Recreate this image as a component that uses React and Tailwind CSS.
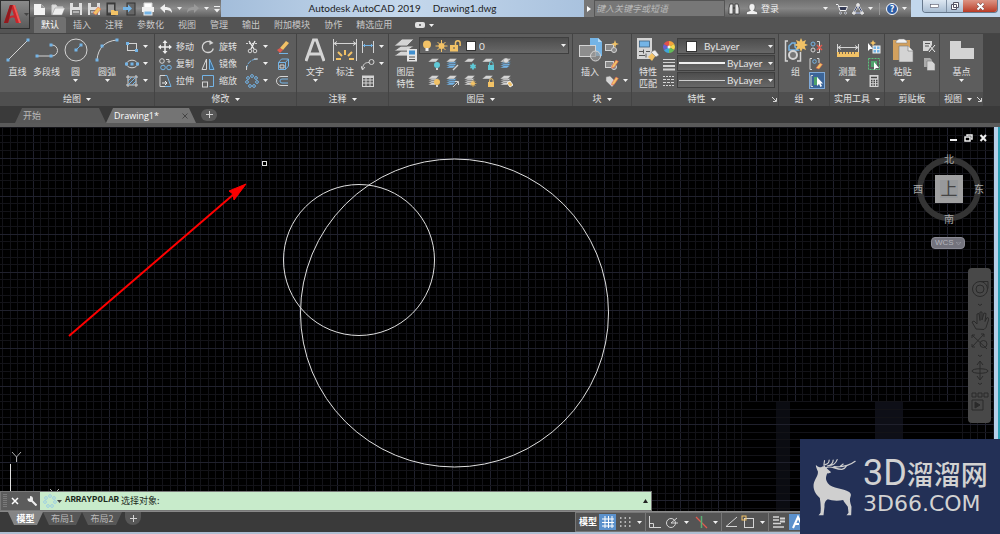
import { Fragment } from 'react';

const L = '#d4d4d4';
const B = '#74b4e6';
const Y = '#f2c266';
const R = '#e05a4e';

function Icon({ w = 14, h = 14, children }) {
  return (
    <svg width={w} height={h} viewBox={`0 0 ${w} ${h}`} fill="none" stroke={L} className="shrink-0" aria-hidden="true">
      {children}
    </svg>
  );
}

function Caret({ dark }) {
  return (
    <svg width="5" height="3" viewBox="0 0 5 3" className="shrink-0" aria-hidden="true">
      <path d="M0 0h5L2.5 3z" fill={dark ? '#444' : '#f0f0f0'} />
    </svg>
  );
}

/* ---------- shared drawing pieces ---------- */

const Dot = ({ x, y }) => <rect x={x - 1.5} y={y - 1.5} width="3" height="3" fill={B} stroke="none" />;

function Sheets({ mark, stack }) {
  return (
    <Icon w={14} h={14}>
      {stack && <path d="M1 9l4-2.5h7L9 9z M1 6.8l4-2.3h7L9 6.8z" fill={stack} stroke="#555" strokeWidth=".4" />}
      {stack && <path d="M1 11l4-2.5h6L8 11z" fill={stack} stroke="#555" strokeWidth=".4" />}
      <path d="M1 5l4-3.5h7L9 5z" fill={L} stroke="#555" strokeWidth=".4" />
      {mark}
    </Icon>
  );
}

const bulb = (c) => <g stroke="none" fill={c}><circle cx="10" cy="8" r="3" /><rect x="9" y="11" width="2" height="2" fill={L} /></g>;
const lock = (c) => <g><path d="M8.5 8V6.5a1.8 1.8 0 013.6 0V8" stroke={c} /><rect x="7" y="8" width="6" height="5" fill={c} stroke="none" /></g>;
const snow = <g stroke="#5fc8d6"><circle cx="10" cy="9.5" r="2" fill="#5fc8d6" /><path d="M10 6v7M7 8l6 3M7 11l6-3" /></g>;
const sunMark = <g stroke={Y}><circle cx="10" cy="9.5" r="1.6" fill={Y} /><path d="M10 6v7M6.5 9.5h7M7.6 7l4.8 5M12.4 7l-4.8 5" strokeWidth=".7" /></g>;
const pencil = <path d="M7 9l4-6 2.4 1.4L9 10.6 6.6 11z" fill={Y} stroke={R} strokeWidth=".6" />;

function Dots({ color = B, bg = 'none' }) {
  const spots = [[7, 2], [11, 4], [12, 8], [9, 12], [5, 12], [2, 8], [3, 4]];
  return (
    <Icon>
      {spots.map(([x, y]) => <circle key={`${x}-${y}`} cx={x} cy={y} r="1.4" stroke={color} fill={bg} />)}
    </Icon>
  );
}

/* ---------- big icons ---------- */

const icons = {
  line: <Icon w={24} h={24}><path d="M2 22L22 2" /><Dot x={2} y={22} /><Dot x={22} y={2} /></Icon>,
  pline: <Icon w={24} h={24}><path d="M2 18h15a5.5 5.5 0 000-11" /><Dot x={2} y={18} /><Dot x={16} y={18} /><Dot x={16} y={7} /></Icon>,
  circle: <Icon w={24} h={24}><circle cx="12" cy="12" r="11" /><path d="M12 12l6-6" stroke={B} /><Dot x={12} y={12} /><Dot x={17} y={7} /></Icon>,
  arc: <Icon w={24} h={24}><path d="M2 22C3 10 10 3 22 2" /><Dot x={2} y={22} /><Dot x={7} y={8} /><Dot x={22} y={2} /></Icon>,
  text: (
    <Icon w={20} h={24}>
      <path d="M1 23L8.5 2h3L19 23M4.5 16h11" strokeWidth="3" />
    </Icon>
  ),
  dim: (
    <Icon w={26} h={24}>
      <path d="M1.5 1v22M24.5 1v22M2 5.500h22M5 3.500l-3 2 3 2M21 3.500l3 2-3 2" />
      <path d="M13 12v5M6 14l4 4M20 14l-4 4M4 21h5M17 21h5" stroke={Y} strokeWidth="2" />
    </Icon>
  ),
  layer: (
    <Icon w={25} h={24}>
      <g fill={L} stroke="#5a5a5a" strokeWidth=".8">
        <path d="M1 18l7-5h13l-7 5z" /><path d="M1 13l7-5h13l-7 5z" /><path d="M1 8l8-7h12l-7 7z" />
      </g>
      <rect x="14" y="11" width="10" height="12.500" fill="#e4e4e4" stroke="none" />
      <rect x="16" y="12.500" width="6" height="4" fill="#3f8fd0" stroke="none" />
      <path d="M16 19h6M16 21.500h6" stroke="#555" />
    </Icon>
  ),
  insert: (
    <Icon w={25} h={24}>
      <path d="M12 0h8l4 4v14H12z" fill={B} stroke="none" /><path d="M20 0v4h4" fill="#b8dcf6" stroke="none" />
      <rect x="1.500" y="7.500" width="16" height="11" fill="#8e8e8e" /><circle cx="17.500" cy="18" r="5" fill="#999" fillOpacity=".7" />
    </Icon>
  ),
  match: (
    <Icon w={22} h={24}>
      <rect x="0" y="0" width="15" height="21" fill={L} stroke="none" />
      <rect x="2.500" y="3" width="10" height="6" fill={B} stroke="#3d5f7d" strokeWidth=".8" />
      <path d="M2 13.500h4M9 13.500h4M2 17.500h6M6.500 11.500v4M9 15.500v4" stroke="#555" />
      <path d="M11 19l5-5 3 3-4 6z" fill={Y} stroke="none" /><path d="M14 14l4-2 4 5-3 2z" fill="#eee" stroke="#777" strokeWidth=".5" />
    </Icon>
  ),
  group: (
    <Icon w={24} h={24}>
      <path d="M4 3H1.500v20H4M13 23h3.500V14" strokeWidth="1.500" />
      <path d="M5 12V8l3-3h3v4l3 3z" stroke={B} strokeWidth="1.500" /><circle cx="9" cy="17" r="4" strokeWidth="2" fill="#777" />
      <path d="M17 0l1.600 3.500L22 2l-1.300 3.600L24 7l-3.300 1.300L22 12l-3.400-1.600L17 14l-1.500-3.600L12 12l1.400-3.700L10 7l3.400-1.400L12 2l3.500 1.500z" fill={Y} stroke="none" />
    </Icon>
  ),
  measure: (
    <Icon w={22} h={24}>
      <path d="M.5 6v9M21.500 6v9M1 9.500h20M4 7.500l-3 2 3 2M18 7.500l3 2-3 2" />
      <rect x="0" y="14" width="22" height="5" fill={Y} stroke="none" /><path d="M2.500 14v2M5.500 14v2M8.500 14v2M11.500 14v2M14.500 14v2M17.500 14v2" stroke="#765" />
    </Icon>
  ),
  paste: (
    <Icon w={22} h={24}>
      <rect x="1" y="2" width="17" height="20" fill="#d3a15e" stroke="none" />
      <path d="M4 5V3l3-2h5l3 2v2z" fill="#f0f0f0" stroke="#777" strokeWidth=".5" />
      <path d="M7 8h9l5 5v11H7z" fill={L} stroke="#777" strokeWidth=".6" /><path d="M16 8v5h5" fill="#eee" stroke="#777" strokeWidth=".6" />
    </Icon>
  ),
  base: <Icon w={24} h={24}><path d="M0 3h11v7h13v11H0z" fill={L} stroke="none" /></Icon>,
};

function BigButton({ icon, label, second, caret, className }) {
  return (
    <button type="button" className={`flex flex-col items-center pt-1 text-[9px] leading-[12px] ${className}`}>
      {icons[icon]}
      <span className="mt-1 whitespace-nowrap">{label}</span>
      {second && <span>{second}</span>}
      {caret && <span className="mt-px"><Caret /></span>}
    </button>
  );
}

function SmallButton({ icon, label, title, caret, active }) {
  return (
    <button
      type="button"
      aria-label={label || title}
      className={`flex h-[17px] items-center gap-1 text-[9px] whitespace-nowrap ${active ? 'border border-[#7fa9d8] bg-[#3c6598]' : ''}`}
    >
      {icon}
      {label}
      {caret && <Caret />}
    </button>
  );
}

function Panel({ title, caret = true, launcher, className, children }) {
  return (
    <section className={`flex shrink-0 flex-col border-r border-[#444] bg-[#5d5d5d] ${className}`}>
      <div className="flex h-[58px] px-[3px]">{children}</div>
      <footer className="flex h-[14px] items-center bg-[#4f4f4f] text-[9px]">
        <span className="flex flex-1 items-center justify-center gap-[5px] whitespace-nowrap">{title}{caret && <Caret />}</span>
        {launcher && (
          <Icon w={7} h={7}><path d="M1 1l4 4M5.500 2v3.500H2" /></Icon>
        )}
      </footer>
    </section>
  );
}

const Stack = ({ className = '', children }) => <div className={`flex flex-col items-start pt-1 ${className}`}>{children}</div>;

/* ---------- top ---------- */

function QuickAccess() {
  const page = <path d="M1 2h7l4 4v7H1z" fill="#f4f4f4" stroke="none" />;
  const disk = <g><path d="M1 1h12v12H1z" fill="#dedede" stroke="none" /><path d="M4 1h6v4H4zM3 8h8v5H3z" fill="#777" stroke="none" /><path d="M4 10h6" stroke="#eee" /></g>;
  const list = [
    ['新建', <Icon>{page}<path d="M8 2v4h4" fill="#999" stroke="none" /></Icon>],
    ['打开', <Icon><path d="M1 13V3h4l1 2h6v2" fill="#ddd" /><path d="M1 13l3-7h10l-3 7z" fill="#eee" stroke="#777" strokeWidth=".4" /></Icon>],
    ['保存', <Icon>{disk}</Icon>],
    ['另存为', <Icon>{disk}<path d="M6 11l5-6 3 2-5 6z" fill={Y} stroke={R} strokeWidth=".5" /></Icon>],
    ['从移动设备打开', <Icon><rect x="2" y="1" width="8" height="12" fill="#444" stroke="#333" /><path d="M3 2.500h6v8H3z" fill="#999" stroke="none" /><path d="M6 13V8h3l1 1h3v4z" fill={Y} stroke="none" /></Icon>],
    ['保存到移动设备', <Icon><rect x="4" y="1" width="8" height="12" fill="#666" stroke="#333" /><path d="M0 5h5V2.500L9 6.500l-4 4V8H0z" fill={B} stroke="none" /></Icon>],
    ['打印', <Icon><path d="M3 5V1h8v4" fill="#fff" /><rect x="1" y="5" width="12" height="5" fill="#f0f0f0" stroke="none" /><rect x="3" y="9" width="8" height="4" fill={B} stroke="#eee" /></Icon>],
  ];
  return (
    <div className="flex h-[17px] w-[191px] shrink-0 items-center gap-[4px] bg-linear-to-b from-[#6e6e6e] via-[#8c8c8c] to-[#5e5e5e] pl-[3px]">
      {list.map(([name, icon]) => <button key={name} type="button" aria-label={name}>{icon}</button>)}
      <button type="button" aria-label="放弃"><Icon><path d="M1 6l5-4v3c5 0 7 2 7 6-2-3-4-3-7-3v3z" fill="#f0f0f0" stroke="none" /></Icon></button>
      <Caret />
      <button type="button" aria-label="重做"><Icon><path d="M13 6L8 2v3c-5 0-7 2-7 6 2-3 4-3 7-3v3z" fill="#9a9a9a" stroke="none" /></Icon></button>
      <Caret />
      <button type="button" aria-label="自定义"><Icon w={8} h={8}><path d="M1 1.500h6" stroke="#eee" /><path d="M1 4h6L4 7.500z" fill="#eee" stroke="none" /></Icon></button>
    </div>
  );
}

function TitleBar() {
  return (
    <div className="flex h-[17px]">
      <QuickAccess />
      <h1 className="flex min-w-0 flex-1 items-center justify-center gap-3 bg-linear-to-r from-[#a3bdda] via-[#c5d8ec] to-[#a9c2de] font-[Lato] text-[10px] whitespace-nowrap text-[#222]">
        <span>Autodesk AutoCAD 2019</span>
        <span>Drawing1.dwg</span>
      </h1>
      <button type="button" aria-label="展开搜索" className="flex w-[10px] items-center justify-center bg-[#777]">
        <Icon w={4} h={6}><path d="M0 0v6l4-3z" fill="#fff" stroke="none" /></Icon>
      </button>
      <input
        aria-label="搜索"
        placeholder="键入关键字或短语"
        className="w-[131px] border border-[#555] bg-[#777] pl-px text-[9px] italic text-[#ddd] placeholder:text-[#bbb]"
      />
      <div className="flex w-[186px] items-center bg-linear-to-b from-[#707070] via-[#868686] to-[#5e5e5e] pl-[3px] text-[9px] text-[#eee]">
        <button type="button" aria-label="查找" className="mr-[6px]">
          <Icon w={12} h={12}><path d="M2 1h3v10H1V5zM10 1H7v10h4V5z" fill="#e8e8e8" stroke="#333" strokeWidth=".8" /><path d="M5 5h2" stroke="#333" /></Icon>
        </button>
        <button type="button" className="flex items-center gap-[3px]">
          <Icon w={12} h={12}><path d="M6 .5a3 3.200 0 013 3.500c0 2-1 3-1.500 3.500L11.500 9v2.500H.5V9l4-1.500C4 7 3 6 3 4A3 3.200 0 016 .5z" fill="#f0f0f0" stroke="#444" strokeWidth=".5" /></Icon>
          登录
        </button>
        <span className="ml-auto"><Caret /></span>
        <button type="button" aria-label="购物车" className="ml-2">
          <Icon w={12} h={12}><path d="M0 1.500h2l2 6h6l1.500-4H3" stroke="#eee" fill="#333a55" /><circle cx="4.500" cy="10" r="1" fill="#222b4c" /><circle cx="9.500" cy="10" r="1" fill="#222b4c" /></Icon>
        </button>
        <button type="button" aria-label="Autodesk" className="mx-1">
          <Icon w={12} h={12}><path d="M6 2l4.500 8h-9z" stroke="#eee" strokeWidth="2" /><path d="M6 2l4.500 8h-9z" stroke="#2d3c6c" /><circle cx="6" cy="2" r="1.500" fill="#eee" /><circle cx="2" cy="10" r="1.300" fill="#eee" /><circle cx="10" cy="10" r="1.300" fill="#eee" /></Icon>
        </button>
        <Caret />
        <span className="mx-[6px] h-3 w-px bg-[#999]" />
        <button type="button" aria-label="帮助" className="mr-1 flex size-3 items-center justify-center rounded-full border border-white bg-[#2f5ea6] text-[9px] font-bold text-white">?</button>
        <span className="mr-1"><Caret /></span>
      </div>
      <div className="flex w-[89px] items-start justify-end bg-[#c2d7ec] pr-[2px]">
        <div className="flex h-[13px] overflow-hidden rounded-b border border-t-0 border-[#66788c]">
          <button type="button" aria-label="最小化" className="flex w-6 items-center justify-center border-r border-[#7f90a4] bg-linear-to-b from-[#dde7f2] to-[#a9bdd2]">
            <Icon w={10} h={6}><rect x=".5" y="1.500" width="8" height="3" fill="#fff" stroke="#556" strokeWidth=".6" /></Icon>
          </button>
          <button type="button" aria-label="还原" className="flex w-4 items-center justify-center bg-linear-to-b from-[#dde7f2] to-[#a9bdd2]">
            <Icon w={10} h={10}><path d="M3.500 1.500h5v5h-5zM1.500 3.500h5v5h-5z" fill="#fff" stroke="#556" /></Icon>
          </button>
          <button type="button" aria-label="关闭" className="flex w-[34px] items-center justify-center bg-linear-to-b from-[#dc9484] to-[#b83a25]">
            <Icon w={9} h={9}><path d="M1.500 1.500l6 6M7.500 1.500l-6 6" stroke="#644" strokeWidth="3" /><path d="M1.500 1.500l6 6M7.500 1.500l-6 6" stroke="#fff" strokeWidth="2" /></Icon>
          </button>
        </div>
      </div>
    </div>
  );
}

const ribbonTabs = ['默认', '插入', '注释', '参数化', '视图', '管理', '输出', '附加模块', '协作', '精选应用'];

function Header() {
  return (
    <header className="flex h-[33px] bg-[#545454]">
      <button type="button" aria-label="应用程序菜单" className="flex h-[29px] w-[30px] shrink-0 items-center border border-[#2e2e2e] bg-linear-to-b from-[#8a8a8a] to-[#5a5a5a]">
        <Icon w={23} h={24}>
          <path d="M3 20L9 2h5l6 18h-5l-1.500-5C11 14 9.500 15 8.500 16L7 20z" fill="#c9252b" stroke="none" />
          <path d="M3 20L9 2l2.500 0L7 20z" fill="#8f1a1e" stroke="none" />
          <path d="M11 6l-2.200 7 4-.8z" fill="#777" stroke="none" />
          <path d="M12 2h2l6 18h-2z" fill="#ee5a55" stroke="none" />
        </Icon>
        <Caret dark />
      </button>
      <div className="flex min-w-0 flex-1 flex-col">
        <TitleBar />
        <nav className="flex h-4 items-center pl-1">
          {ribbonTabs.map((t, i) => (
            <button
              key={t}
              type="button"
              className={`h-full rounded-t-xs px-[7px] text-[9px] whitespace-nowrap ${i === 0 ? 'bg-[#707070] text-white' : 'text-[#c9c9c9]'}`}
            >
              {t}
            </button>
          ))}
          <button type="button" aria-label="功能区显示" className="ml-4 flex items-center gap-1">
            <Icon w={10} h={6}><rect width="10" height="6" rx="2" fill="#e0e0e0" stroke="none" /><circle cx="5" cy="3" r="1" fill="#555" stroke="none" /></Icon>
            <Caret />
          </button>
        </nav>
      </div>
    </header>
  );
}

/* ---------- ribbon ---------- */

const move = <Icon><path d="M7 1v12M1 7h12" stroke="#eee" strokeWidth="1.500" /><path d="M7 0l2.500 3h-5zM7 14l2.500-3h-5zM0 7l3-2.500v5zM14 7l-3-2.500v5z" fill="#eee" stroke="none" /></Icon>;
const copy = <Icon><circle cx="4" cy="4" r="2.300" /><path d="M8 2.500h3v3M9.500 4l1.500 1.500L12.500 4" /><circle cx="5" cy="10.500" r="2.300" stroke={B} /><circle cx="11" cy="10.500" r="2.300" stroke={B} /></Icon>;
const stretch = <Icon><path d="M7 1.500H2v11h5" /><path d="M7 1.500h2l4 11H7" stroke={B} /><path d="M4 9h5M7 7l2 2-2 2" stroke="#eee" /></Icon>;
const rotate = <Icon><path d="M10 2.500A5.500 5.500 0 107 12.500a5.500 5.500 0 005.300-4" strokeWidth="1.300" /><path d="M8.500 0v5l4-2z" fill={L} stroke="none" /></Icon>;
const mirror = <Icon><path d="M5.500 2v10.500H1z" /><path d="M8.500 2v10.500H13z" stroke={B} fill="#3f6d93" /></Icon>;
const scale = <Icon><rect x="1.500" y="8" width="5" height="5" /><path d="M1.500 6V1.500h11v11H8.500" stroke={B} /></Icon>;
const trim = <Icon><path d="M1 3.500h12" strokeDasharray="2 1" /><path d="M4 1l5 8M10 1L6 9" stroke="#eee" strokeWidth="1.300" /><circle cx="5" cy="11" r="1.800" /><circle cx="10" cy="11" r="1.800" /></Icon>;
const fillet = <Icon><path d="M1.500 13C1.500 6 6 2 13 2" stroke={B} strokeDasharray="5 1" /><path d="M1.500 13V9M9 2h4" /></Icon>;
const erase = <Icon><path d="M5 8l6-7 3 2-6 7z" fill={Y} stroke="none" /><path d="M2 10l3-2 3 2-3 3z" fill={R} stroke="none" /><path d="M4 13.500h9" stroke={B} /></Icon>;
const explode = <Icon><path d="M3.500 5.500h7v7h-7zM3.500 5.500l3-3.500h7l-3 3.500M13.500 2v7l-3 3.500" stroke={B} /><path d="M5 8h4v3H5z" /></Icon>;
const offset = <Icon><path d="M13 2.500H6a4.500 4.500 0 000 9h7" /><path d="M13 5H7a2 2 0 000 4h6" stroke={B} /></Icon>;

const rectIcon = <Icon><rect x="2.500" y="3.500" width="9" height="7" /><Dot x={2.500} y={3.500} /><Dot x={11.500} y={10.500} /></Icon>;
const ellipse = <Icon><ellipse cx="7" cy="7" rx="5.500" ry="3.800" /><Dot x={7} y={7} /><Dot x={1.500} y={7} /><Dot x={12.500} y={7} /></Icon>;
const hatch = <Icon><path d="M3 1v12M11 1v12M1 3h12M1 11h12" /><path d="M3 7l4-4M3 11l8-8M7 11l4-4" stroke={B} /></Icon>;

const linear = <Icon><path d="M1.500 1v12M12.500 1v12" /><path d="M2 5.500h10M4 4L2.500 5.500 4 7M10 4l1.500 1.500L10 7" stroke={B} /></Icon>;
const leader = <Icon><path d="M1.500 12C2 7 4 5.500 8 5.500" /><circle cx="10.500" cy="5" r="2.500" /><path d="M0 9l1.500 4L4 10" /></Icon>;
const table = <Icon><rect x="1.500" y="2" width="11" height="10.500" /><path d="M2 3h10" strokeWidth="2" /><path d="M1.500 6h11M1.500 9h11M5 4v9M9 4v9" /></Icon>;

const block = <g><rect x=".5" y="4.500" width="8" height="6" fill="#888" /><circle cx="9" cy="10" r="2.500" fill="#888" /></g>;
const spark = <path d="M10 0l1 3 3 1-3 1-1 3-1-3-3-1 3-1z" fill={Y} stroke="none" />;

function Wheel() {
  const colors = ['#f3a43a', '#f6d94c', '#63bb5a', '#3fa7d8', '#6a5fd0', '#e1504c'];
  return (
    <Icon>
      {colors.map((c, i) => <path key={c} d="M7 7V1a6 6 0 015.200 3z" fill={c} stroke="none" transform={`rotate(${i * 60} 7 7)`} />)}
      <circle cx="7" cy="7" r="1.500" fill="#eee" stroke="none" />
    </Icon>
  );
}

function LayerSelect() {
  return (
    <div className="relative h-[17px] w-full">
      <select aria-label="当前图层" className="block h-full w-full appearance-none border border-[#3f3f3f] bg-linear-to-b from-[#4d4d4d] to-[#686868] pl-[59px] font-[Lato] text-[10px] leading-[12px] text-[#e4e4e4]">
        <option>0</option>
      </select>
      <div className="pointer-events-none absolute inset-0 flex items-center pl-[2px]">
        <Icon><circle cx="6" cy="5.500" r="4" fill={Y} stroke="none" /><path d="M4.500 9h3v3h-3z" fill="#eee" stroke="none" /></Icon>
        <Icon><circle cx="6.500" cy="7" r="3" fill={Y} stroke="none" /><path d="M6.500 1v12M.5 7h12M2.500 3l8 8M10.500 3l-8 8" stroke={Y} /></Icon>
        <Icon><path d="M6.500 6V4a2.300 2.300 0 014.600 0v3" stroke={Y} strokeWidth="1.500" /><rect x="1" y="6" width="8" height="6.500" fill={Y} stroke="none" /><path d="M5 8v2" stroke="#555" /></Icon>
        <span className="ml-[3px] size-[10px] border border-[#333] bg-white" />
        <span className="mr-[3px] ml-auto"><Caret /></span>
      </div>
    </div>
  );
}

function PropSelect({ label, kind }) {
  return (
    <div className="relative h-[17px] w-full">
      <select
        aria-label={label}
        className={`block h-4 w-full appearance-none border border-[#3f3f3f] bg-linear-to-b from-[#4d4d4d] to-[#686868] font-[Lato] text-[10px] leading-[12px] text-[#e4e4e4] ${kind === 'color' ? 'pl-[26px]' : 'pl-[49px]'}`}
      >
        <option>ByLayer</option>
      </select>
      <div className="pointer-events-none absolute inset-x-0 top-0 flex h-4 items-center">
        {kind === 'color' && <span className="ml-[9px] size-[11px] border border-[#333] bg-white" />}
        {kind === 'weight' && <span className="ml-[2px] h-[2px] w-[46px] bg-[#f0f0f0]" />}
        {kind === 'type' && <span className="ml-[2px] h-px w-[46px] bg-[#d0d0d0]" />}
        <span className="mr-[2px] ml-auto"><Caret /></span>
      </div>
    </div>
  );
}

function Ribbon() {
  return (
    <div className="flex overflow-hidden border-t border-[#454545] bg-[#444] text-[#e2e2e2]">
      <Panel title="绘图" className="w-[155px]">
        <BigButton icon="line" label="直线" className="w-[29px]" />
        <BigButton icon="pline" label="多段线" className="w-[29px]" />
        <BigButton icon="circle" label="圆" caret className="w-[29px]" />
        <BigButton icon="arc" label="圆弧" caret className="w-[34px]" />
        <Stack className="pl-px">
          <SmallButton title="矩形" icon={rectIcon} caret />
          <SmallButton title="椭圆" icon={ellipse} caret />
          <SmallButton title="图案填充" icon={hatch} caret />
        </Stack>
      </Panel>

      <Panel title="修改" className="w-[142px]">
        <Stack className="w-[43px]">
          <SmallButton label="移动" icon={move} />
          <SmallButton label="复制" icon={copy} />
          <SmallButton label="拉伸" icon={stretch} />
        </Stack>
        <Stack className="w-[44px]">
          <SmallButton label="旋转" icon={rotate} />
          <SmallButton label="镜像" icon={mirror} />
          <SmallButton label="缩放" icon={scale} />
        </Stack>
        <Stack className="w-[30px]">
          <SmallButton title="修剪" icon={trim} caret />
          <SmallButton title="圆角" icon={fillet} caret />
          <SmallButton title="阵列" icon={<Dots />} caret />
        </Stack>
        <Stack>
          <SmallButton title="删除" icon={erase} />
          <SmallButton title="分解" icon={explode} />
          <SmallButton title="偏移" icon={offset} />
        </Stack>
      </Panel>

      <Panel title="注释" className="w-[92px]">
        <BigButton icon="text" label="文字" caret className="w-[30px]" />
        <BigButton icon="dim" label="标注" className="w-[30px]" />
        <Stack className="pl-px">
          <SmallButton title="线性" icon={linear} caret />
          <SmallButton title="引线" icon={leader} caret />
          <SmallButton title="表格" icon={table} />
        </Stack>
      </Panel>

      <Panel title="图层" className="w-[184px]">
        <BigButton icon="layer" label="图层" second="特性" className="w-[27px]" />
        <div className="flex flex-1 flex-col pt-[3px]">
          <LayerSelect />
          <div className="grid grid-cols-[repeat(5,18px)] pt-px pl-2">
            <SmallButton title="关" icon={<Sheets mark={bulb('#5fc8d6')} />} />
            <SmallButton title="隔离" icon={<Sheets stack={B} mark={<path d="M8 13l5-5" strokeWidth="1.500" />} />} />
            <SmallButton title="冻结" icon={<Sheets mark={snow} />} />
            <SmallButton title="锁定" icon={<Sheets mark={lock('#5fc8d6')} />} />
            <SmallButton title="置为当前" icon={<Sheets stack={B} mark={<circle cx="7" cy="3.500" r="2.500" fill="#ddd" stroke="#777" strokeWidth=".4" />} />} />
            <SmallButton title="打开所有图层" icon={<Sheets stack={L} mark={bulb(Y)} />} />
            <SmallButton title="取消隔离" icon={<Sheets stack={B} mark={<path d="M8 13l5-5M10 7.500h3.500V11" />} />} />
            <SmallButton title="解冻" icon={<Sheets stack={L} mark={sunMark} />} />
            <SmallButton title="解锁" icon={<Sheets mark={lock(Y)} />} />
            <SmallButton title="匹配图层" icon={<Sheets stack={L} mark={<path d="M8 9l3-2 3 4-3 2z" fill={Y} stroke="#eee" />} />} />
          </div>
        </div>
      </Panel>

      <Panel title="块" className="w-[59px]">
        <BigButton icon="insert" label="插入" className="w-[29px]" />
        <Stack className="pl-px">
          <SmallButton title="创建" icon={<Icon>{block}{spark}</Icon>} />
          <SmallButton title="编辑" icon={<Icon>{block}{pencil}</Icon>} />
          <SmallButton title="编辑属性" icon={<Icon><path d="M1 3l4-1 6 6-4 5-6-6z" fill={L} stroke="#777" strokeWidth=".5" />{pencil}</Icon>} caret />
        </Stack>
      </Panel>

      <Panel title="特性" launcher className="w-[147px]">
        <BigButton icon="match" label="特性" second="匹配" className="w-[26px]" />
        <Stack className="w-[16px] pl-px">
          <SmallButton title="对象颜色" icon={<Wheel />} />
          <SmallButton title="线宽" icon={<Icon><path d="M1 2.500h12M1 5.500h12" /><path d="M1 9h12M1 12.500h12" strokeWidth="2" /></Icon>} />
          <SmallButton title="线型" icon={<Icon><path d="M1 2.500h12M1 11.500h12" strokeDasharray="2 1" /><path d="M1 5.500h12M1 8.500h12" strokeDasharray="3 1" /></Icon>} />
        </Stack>
        <div className="flex flex-1 flex-col pt-1">
          <PropSelect label="颜色" kind="color" />
          <PropSelect label="线宽" kind="weight" />
          <PropSelect label="线型" kind="type" />
        </div>
      </Panel>

      <Panel title="组" className="w-[51px]">
        <BigButton icon="group" label="组" className="w-[27px]" />
        <Stack>
          <SmallButton title="解除编组" icon={<Icon><circle cx="4" cy="4" r="2" stroke={B} /><circle cx="4" cy="10" r="2" /><path d="M8 1.500h2.500v11H8" /><path d="M8 5l5 5M13 5l-5 5" stroke={R} strokeWidth="1.500" /></Icon>} />
          <SmallButton title="组编辑" icon={<Icon><path d="M3 1.500H1v11h2M8 1.500h2V6" /><circle cx="5.500" cy="4.500" r="1.800" stroke={B} /><path d="M7 11l4-5 2.500 1.500L10 12z" fill={Y} stroke={R} strokeWidth=".5" /></Icon>} />
          <SmallButton title="启用组选择" active icon={<Icon><path d="M3 1.500H1v11h2" /><path d="M4 3h4v8H4z" fill="#4fa36a" stroke="none" /><path d="M7 3v9l2-2 1.500 3 1.500-1-1.500-2.500H13z" fill="#fff" stroke="none" /></Icon>} />
        </Stack>
      </Panel>

      <Panel title="实用工具" className="w-[55px]">
        <BigButton icon="measure" label="测量" caret className="w-[29px]" />
        <Stack className="pl-[5px]">
          <SmallButton title="快速选择" icon={<Icon><path d="M1 3v8l2-2h3z" fill="#fff" stroke="none" /><rect x="6" y="6" width="7" height="7" fill={B} stroke="#eee" /><path d="M9.500 6v7M6 9.500h7" stroke="#eee" /><path d="M6 0l1 2 2 1-2 1-1 2-1-2-2-1 2-1z" fill={Y} stroke="none" /></Icon>} />
          <SmallButton title="全部选择" icon={<Icon><rect x="1.500" y="1.500" width="11" height="11" stroke="#5cc27c" strokeDasharray="2 1" /><path d="M4 4h6v6H4z" fill="#4fa36a" stroke="none" /><path d="M7 5v8l2-2h3z" fill="#fff" stroke="none" /></Icon>} />
          <SmallButton title="计算器" icon={<Icon><rect x="2.500" y="1" width="9" height="12" fill={L} stroke="none" /><path d="M4 3.500h6M4 6.500h1.500M6.500 6.500H8M9 6.500h1.500M4 8.500h1.500M6.500 8.500H8M9 8.500h1.500M4 11h1.500M6.500 11H8M9 11h1.500" stroke="#444" strokeWidth="1.300" /></Icon>} />
        </Stack>
      </Panel>

      <Panel title="剪贴板" caret={false} className="w-[55px]">
        <BigButton icon="paste" label="粘贴" caret className="w-[29px]" />
        <Stack className="pl-[5px]">
          <SmallButton title="剪切" icon={<Icon><path d="M1 1h9v4L6 11H1z" fill={L} stroke="none" /><path d="M3 3.500h5M3 6h4" stroke="#555" /><path d="M7 5l6 7M13 5l-6 7" stroke="#eee" /></Icon>} />
          <SmallButton title="复制剪裁" icon={<Icon><path d="M2 1h6l2 2v7H2z" fill="#aaa" stroke="none" /><path d="M5 4h5l3 3v6.500H5z" fill={L} stroke="#666" strokeWidth=".5" /></Icon>} />
        </Stack>
      </Panel>

      <Panel title="视图" launcher className="w-[44px]">
        <BigButton icon="base" label="基点" caret className="w-full" />
      </Panel>
    </div>
  );
}

/* ---------- document tabs ---------- */

const trapezoid = '[clip-path:polygon(7px_0,calc(100%-7px)_0,100%_100%,0_100%)]';

function DocTabs() {
  return (
    <div className="box-content flex h-[17px] items-end border-b-4 border-[#5a5a5a] bg-[#3a3a3a] pl-[15px]">
      <button type="button" className={`h-[15px] w-[91px] rounded-t-md bg-[#585858] pl-[8px] text-left text-[9px] text-[#b8b8b8] ${trapezoid}`}>开始</button>
      <div className={`flex h-[15px] w-[90px] items-center justify-between rounded-t-md bg-[#747474] px-[8px] ${trapezoid}`}>
        <button type="button" className="font-['Open_Sans'] text-[9px] font-medium text-white">Drawing1*</button>
        <button type="button" aria-label="关闭图形"><Icon w={6} h={6}><path d="M.5.5l5 5M5.500.5l-5 5" stroke="#444" /></Icon></button>
      </div>
      <button type="button" aria-label="新图形" className="ml-[5px] flex h-[12px] w-4 items-center justify-center self-center rounded-md bg-[#585858]">
        <Icon w={7} h={7}><path d="M3.500 0v7M0 3.500h7" /></Icon>
      </button>
    </div>
  );
}

/* ---------- drawing area ---------- */

const MAJOR = 38.1;
const MINOR = MAJOR / 5;

function Grid() {
  const lines = [];
  for (let i = 0; i < 400; i++) {
    const x = Math.round(-5.6 + i * MINOR) + 0.5;
    lines.push(<line key={`v${i}`} x1={x} x2={x} y1="0" y2="100%" stroke={i % 5 === 0 ? '#20212d' : '#131318'} />);
  }
  const rows = [];
  for (let i = 0; i < 200; i++) {
    const y = Math.round(-7.6 + i * MINOR) + 0.5;
    rows.push(<line key={`h${i}`} x1="0" x2="100%" y1={y} y2={y} stroke={i % 5 === 0 ? '#20212d' : '#131318'} />);
  }
  return (
    <g>
      {lines}
      <rect x="746" y="274" width="216" height="110" fill="#000" />
      <rect x="776" y="274" width="14" height="110" fill="#0b0c12" />
      <rect x="875" y="274" width="28" height="110" fill="#0e0f17" />
      {rows}
    </g>
  );
}

function ViewCube() {
  return (
    <svg width="74" height="74" viewBox="0 0 74 74" aria-label="ViewCube" className="font-['Noto_Sans_CJK_SC',sans-serif]">
      <circle cx="37" cy="37" r="29" fill="none" stroke="#343434" strokeWidth="6" />
      <rect x="23" y="23" width="28" height="28" fill="#a0a0a0" />
      <rect x="28" y="28" width="18" height="18" fill="#97999b" />
      <text x="37" y="43" fontSize="17" textAnchor="middle" fill="#444">上</text>
      <g fontSize="10" fill="#a8a8a8" textAnchor="middle">
        <text x="37" y="11">北</text>
        <text x="37" y="71">南</text>
        <text x="6" y="41">西</text>
        <text x="67" y="41">东</text>
      </g>
    </svg>
  );
}

function NavBar() {
  return (
    <div className="flex w-[23px] flex-col items-center rounded-sm bg-[#484848] py-3">
      <svg width="18" height="131" viewBox="0 0 18 131" fill="none" stroke="#2a2a2a" aria-hidden="true">
        <circle cx="9" cy="9" r="7.500" /><circle cx="9" cy="9" r="4" /><path d="M9 1.500h8v7" />
        <path d="M7 24l2 1.500 2-1.500M7 75l2 1.500 2-1.500M7 103l2 1.500 2-1.500" />
        <path d="M5 49L1 42l2-1 3 3V34l2-.5 1 7V32l2 0 0 8 2-7 2 .5-1 8 2-4 2 1-3 9-2 2z" />
        <path d="M1 55l15 14M13 54L1 67M1 58v-3h3M10 54h3v3M1 64v3h3" /><circle cx="12.500" cy="64" r="3.500" />
        <path d="M9 82v17M6 85l3-4 3 4M1 91c0-3 16-3 16 0s-16 3-16 0M6 96l3 4 3-4" />
        <path d="M1 113h4v4H1zM7 113h4v4H7zM13 113h4v4h-4zM1 120h11v10H1z" /><path d="M4 122l5 3-5 3z" fill="#2a2a2a" />
      </svg>
    </div>
  );
}

function CommandLine() {
  return (
    <div className="absolute bottom-0 left-0 flex h-5 w-[65.300%] border border-[#777] bg-[#c8ebcb]">
      <div className="flex items-center gap-2 bg-[#5c5c5c] pr-[3px] pl-[2px]">
        <Icon w={4} h={14}><path d="M1 0v14M3 0v14" stroke="#999" strokeDasharray="1 1" /></Icon>
        <button type="button" aria-label="关闭命令行" className="-ml-1"><Icon w={8} h={8}><path d="M1 1l6 6M7 1L1 7" stroke="#fff" strokeWidth="1.500" /></Icon></button>
        <button type="button" aria-label="自定义"><Icon w={10} h={10}><path d="M9.500 9.500L4.500 4.500" stroke="#eee" strokeWidth="2" /><path d="M3 0l0 2.500H.5A3 3 0 003 6a3 3 0 003-3A3 3 0 003 0z" fill="#eee" stroke="none" /></Icon></button>
      </div>
      <label htmlFor="cmd" className="flex items-center pl-[3px] text-[9px] whitespace-nowrap text-[#1c2a1c]">
        <Dots color="#9fd0e2" />
        <Caret dark />
        <span className="ml-[3px] font-['Liberation_Mono'] text-[9px] font-bold">ARRAYPOLAR</span>
        <span className="ml-[2px]">选择对象:</span>
      </label>
      <input id="cmd" className="min-w-0 flex-1 bg-transparent text-[9px] outline-none" />
      <button type="button" aria-label="历史记录" className="pr-[3px]"><Icon w={5} h={4}><path d="M0 4l2.500-4L5 4z" fill="#222" stroke="none" /></Icon></button>
    </div>
  );
}

function Canvas() {
  return (
    <main className="relative min-h-[300px] flex-1 overflow-hidden border-r-2 border-[#2b9fb4] bg-black">
      <svg className="absolute inset-0 h-full w-full" aria-label="模型空间">
        <Grid />
        <g fill="none" stroke="#e0e0e0">
          <circle cx="454.500" cy="186" r="154" />
          <circle cx="359" cy="133" r="75.500" />
          <rect x="262.500" y="34.500" width="4" height="4" />
          <path d="M10.500 337v60" />
          <path d="M12 325l4.500 5 4.500-5M16.500 330v5M50 362l9 9M59 362l-9 9" stroke="#aaa" />
        </g>
        <path d="M69 209L234 67" stroke="#f00" strokeWidth="2" />
        <path d="M246 57l-17 7 4 3 1 6z" fill="#f00" stroke="#f00" />
      </svg>
      <div className="absolute inset-y-0 right-0 w-1 bg-[#b5d0ea]" />
      <div className="absolute top-[7px] right-[10px] flex items-center gap-[6px]">
        <button type="button" aria-label="最小化图形"><Icon w={9} h={8}><path d="M1 6h7" stroke="#eee" strokeWidth="2" /></Icon></button>
        <button type="button" aria-label="还原图形"><Icon w={9} h={8}><path d="M3 2V1h5v4H7M1 3h5v4H1z" stroke="#eee" strokeWidth="1.500" /></Icon></button>
        <button type="button" aria-label="关闭图形窗口"><Icon w={9} h={8}><path d="M1.500 1l5.500 6M7 1L1.500 7" stroke="#eee" strokeWidth="2" /></Icon></button>
      </div>
      <div className="absolute top-[25px] right-[12px]"><ViewCube /></div>
      <button type="button" className="absolute top-[110px] right-[33px] flex h-3 w-[34px] items-center justify-between rounded-sm border border-[#8a8a94] bg-[#73737d] px-[3px] font-['Liberation_Sans'] text-[8px] text-[#b4b4bc]">
        WCS
        <Icon w={5} h={3}><path d="M0 0h5L2.500 3z" stroke="#a0a0a8" strokeWidth=".6" /></Icon>
      </button>
      <div className="absolute top-[141px] right-[7px]"><NavBar /></div>
      <CommandLine />
    </main>
  );
}

/* ---------- bottom ---------- */

const bottomTrapezoid = '[clip-path:polygon(0_0,100%_0,calc(100%-6px)_100%,6px_100%)]';

const statusGroups = [
  [
    ['栅格', <Icon><path d="M4 1v12M7.500 1v12M11 1v12M1 4h12M1 7.500h12M1 11h12" stroke="#fff" /></Icon>, true],
    ['捕捉', <Icon><path d="M2 3h11M2 7h11M2 11h11" strokeWidth="1.500" strokeDasharray="1.500 3" /></Icon>, false, true],
  ],
  [
    ['正交', <Icon><path d="M1.500 1v11.500H13M1.500 8.500h4v4" /></Icon>],
    ['极轴追踪', <Icon><circle cx="6" cy="8" r="4.500" /><path d="M6 8l6-5M6 8h7" /></Icon>, false, true],
    ['等轴测草图', <Icon><path d="M2 2l11 11" stroke={R} strokeWidth="1.300" /><path d="M7.500 1v12" stroke="#5cae72" strokeWidth="1.500" /></Icon>, false, true],
  ],
  [
    ['对象捕捉追踪', <Icon><path d="M13 2L2 11.500h11" /></Icon>],
    ['对象捕捉', <Icon><rect x="3.500" y="3.500" width="9" height="9" /><rect x="1" y="1" width="4" height="4" stroke={Y} /></Icon>, false, true],
  ],
];

function StatusBar() {
  return (
    <footer className="flex h-[21px] justify-between border-t border-[#888] bg-[#3a3a3a] text-[9px]">
      <nav className="flex h-[13px] items-stretch pl-[8px]">
        <button type="button" className={`w-[35px] bg-[#858585] leading-[12px] font-bold text-white ${bottomTrapezoid}`}>模型</button>
        <button type="button" className={`w-[39px] bg-[#575757] leading-[12px] text-[#bbb] ${bottomTrapezoid}`}>布局1</button>
        <button type="button" className={`w-[40px] bg-[#575757] leading-[12px] text-[#bbb] ${bottomTrapezoid}`}>布局2</button>
        <button type="button" aria-label="新建布局" className="ml-[3px] flex w-[16px] items-center justify-center rounded-b-lg bg-[#575757]">
          <Icon w={7} h={7}><path d="M3.500 0v7M0 3.500h7" /></Icon>
        </button>
      </nav>
      <div className="flex w-[42.500%] items-center border border-[#777] bg-[#545454] pl-[3px]">
        <button type="button" className="mr-[2px] leading-[12px] font-bold whitespace-nowrap text-white">模型</button>
        {statusGroups.map((group, i) => (
          <Fragment key={i}>
            {group.map(([name, icon, on, caret]) => (
              <Fragment key={name}>
                <button type="button" aria-label={name} className={`flex h-4 w-[17px] shrink-0 items-center justify-center ${on ? 'bg-[#5b91cc]' : ''}`}>{icon}</button>
                {caret && <span className="mr-[3px] ml-[4px]"><Caret /></span>}
              </Fragment>
            ))}
            <span className="h-full w-px shrink-0 bg-[#777]" />
          </Fragment>
        ))}
        <button type="button" aria-label="线宽显示" className="flex w-5 shrink-0 items-center justify-center">
          <Icon><path d="M1 2h6M1 5h6M1 8.500h8M1 12h11" strokeWidth="1.500" /><path d="M8 3.500h5M8 6.500h5" strokeWidth="2" /></Icon>
        </button>
        <button type="button" aria-label="注释可见性" className="flex h-4 w-[18px] shrink-0 items-center justify-center bg-[#5b91cc]">
          <Icon><path d="M2 13l5-11 3 6 3 4M4 9h4" stroke="#fff" strokeWidth="2" /></Icon>
        </button>
      </div>
    </footer>
  );
}

function Watermark() {
  return (
    <div className="absolute right-0 bottom-0 flex h-[95px] w-[200px] items-center gap-[6px] bg-[#233056] pl-[12px] text-[#d2d2d2]">
      <svg width="45" height="60" viewBox="36 55 132 180" className="shrink-0" aria-hidden="true">
        <path
          fill="#cfcfcf"
          d="M46 78C50 84 56 86 62 86c6-6 14-4 18 4l12 11q-6 4-12 3c-4 12-6 18 2 30 14 18 46 14 64 26 6 5 6 10 4 14-4 10 0 20 3 30l-1 26h-14q3-5 6-8l-2-18c-6-8-12-14-14-20-16 4-36 2-46-2-10 6-10 14-10 22l-3 26H54q4-4 6-8c2-16 0-30-2-44-12-10-22-26-18-44 4-16 14-24 12-36-2-6-6-12-6-20z"
        />
        <g fill="none" stroke="#cfcfcf" strokeWidth="3.500" strokeLinecap="round">
          <path d="M76 88C90 78 102 92 124 92c8-2 12-6 14-10M100 84c26 2 46-2 64-16M118 84l10-8" />
          <path d="M72 84C68 76 72 72 72 66M74 78c8-2 12-8 12-14M80 82c12-2 18-8 18-18M88 80c10 0 18-6 22-17" />
        </g>
      </svg>
      <div className="flex flex-col gap-1 whitespace-nowrap">
        <div className="flex h-[31px] items-center leading-[31px]">
          <span className="font-[Roboto] text-[36px]">3D</span>
          <span className="text-[27px] font-medium">溜溜网</span>
        </div>
        <div className="font-['DejaVu_Sans'] text-[22px] leading-[22px]">3D66.COM</div>
      </div>
    </div>
  );
}

export default function App() {
  return (
    <div className="relative flex min-h-screen flex-col bg-[#3a3a3a] font-['Noto_Sans_CJK_SC',sans-serif]">
      <Header />
      <Ribbon />
      <DocTabs />
      <Canvas />
      <StatusBar />
      <div className="h-[2px] bg-[#aebed2]" />
      <Watermark />
    </div>
  );
}
